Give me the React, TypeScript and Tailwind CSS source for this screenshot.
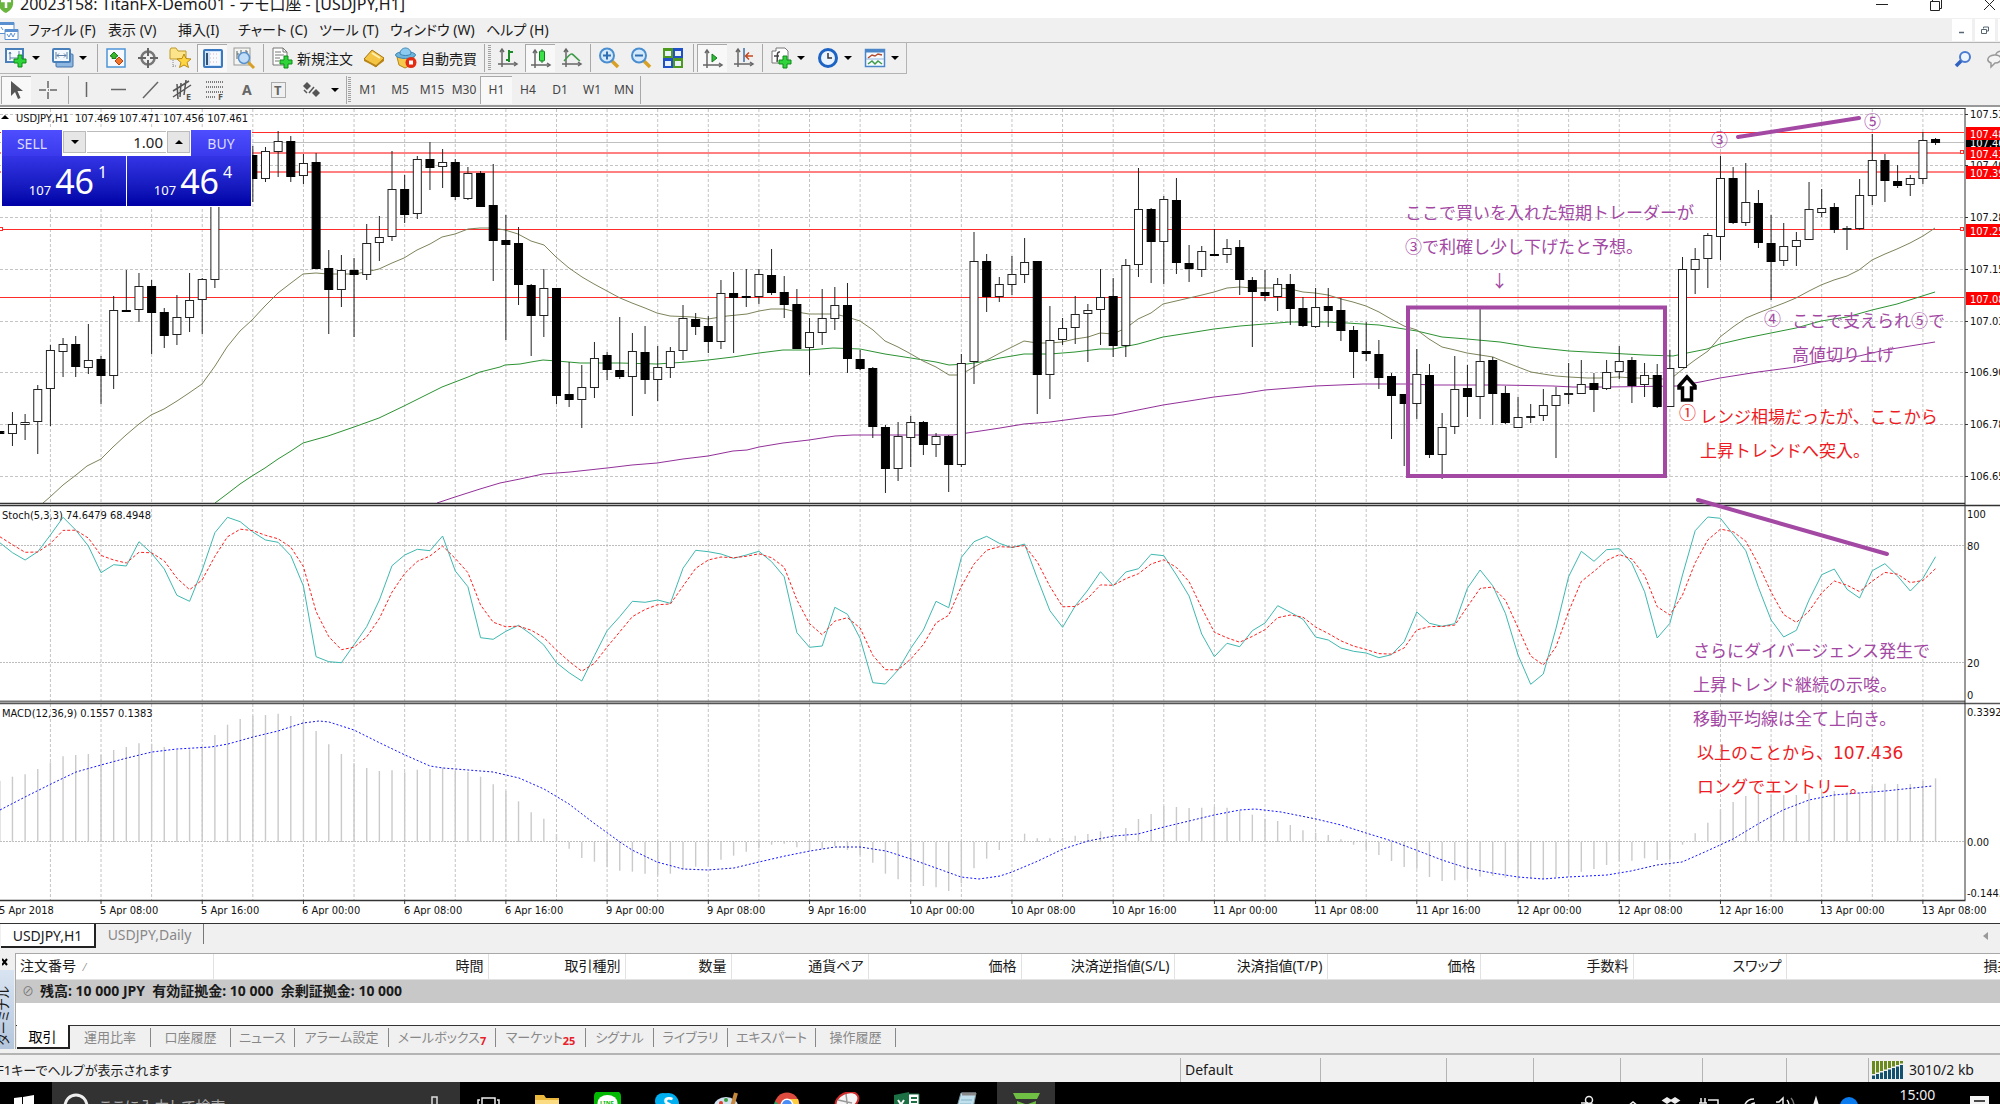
import React from "react";

type Candle = [high: number, top: number, bottom: number, low: number, up: 0 | 1];

const BAR_STEP = 12.652;
const barX = (index: number) => index * BAR_STEP - 0.2;

const candles: (Candle | null)[] = [
  [431, 431, 434, 434, 0], [412, 424, 434, 446, 1], [414, 422, 425, 440, 1], [385, 389, 422, 454, 1],
  [345, 350, 389, 426, 1], [338, 344, 352, 377, 1], [336, 344, 367, 377, 0], [324, 360, 368, 374, 1],
  [356, 359, 376, 404, 0], [296, 310, 376, 389, 1], [270, 310, 311, 312, 0], [273, 286, 310, 322, 1],
  [280, 286, 313, 354, 0], [308, 312, 336, 348, 0], [295, 317, 335, 345, 1], [273, 300, 318, 332, 1],
  [278, 279, 300, 334, 1], [170, 170, 280, 288, 1], null, null,
  [146, 155, 179, 202, 0], [147, 151, 179, 182, 1], [131, 141, 152, 177, 1], [136, 141, 177, 182, 0],
  [154, 163, 176, 184, 1], [153, 162, 269, 269, 0], [250, 268, 290, 334, 0], [255, 270, 290, 307, 1],
  [258, 270, 275, 337, 0], [224, 243, 275, 280, 1], [216, 237, 243, 261, 1], [151, 189, 237, 241, 1],
  [175, 189, 215, 223, 0], [156, 159, 214, 219, 1], [142, 159, 168, 190, 0], [149, 162, 167, 188, 1],
  [159, 162, 197, 200, 0], [167, 173, 199, 200, 1], [171, 173, 207, 207, 0], [164, 205, 241, 281, 0],
  [215, 240, 245, 340, 0], [227, 243, 285, 305, 0], [284, 285, 316, 356, 0], [269, 288, 316, 337, 1],
  [288, 288, 396, 404, 0], [362, 394, 400, 407, 0], [365, 387, 400, 428, 1], [342, 358, 388, 398, 1],
  [352, 355, 370, 380, 0], [317, 370, 377, 379, 0], [333, 351, 377, 416, 1], [326, 352, 380, 394, 0],
  [346, 367, 380, 401, 1], [347, 351, 368, 378, 1], [305, 318, 351, 360, 1], [313, 319, 327, 335, 0],
  [316, 326, 342, 353, 0], [280, 293, 342, 349, 1], [272, 293, 298, 353, 0], [269, 296, 297, 307, 0],
  [269, 274, 297, 304, 1], [249, 275, 293, 295, 0], [276, 292, 305, 318, 0], [289, 304, 349, 349, 0],
  [318, 332, 348, 375, 1], [289, 318, 333, 345, 1], [287, 305, 319, 330, 1], [283, 305, 359, 373, 0],
  [350, 359, 369, 370, 0], [367, 368, 427, 438, 0], [425, 427, 469, 493, 0], [422, 436, 469, 481, 1],
  [416, 422, 438, 467, 1], [421, 422, 445, 455, 0], [433, 436, 445, 457, 1], [435, 436, 465, 492, 0],
  [354, 363, 465, 467, 1], [232, 261, 362, 384, 1], [254, 261, 297, 312, 0], [277, 284, 297, 302, 1],
  [256, 274, 285, 295, 1], [238, 262, 275, 283, 1], [261, 261, 375, 414, 0], [306, 340, 375, 399, 1],
  [318, 328, 340, 345, 1], [296, 314, 328, 344, 1], [304, 310, 314, 362, 1], [269, 297, 310, 345, 1],
  [278, 296, 346, 357, 0], [259, 265, 346, 357, 1], [168, 209, 265, 277, 1], [208, 209, 242, 283, 0],
  [196, 199, 242, 284, 1], [178, 200, 263, 274, 0], [245, 263, 269, 282, 0], [246, 251, 270, 277, 1],
  [229, 254, 256, 256, 0], [239, 248, 255, 263, 1], [240, 247, 280, 295, 0], [277, 280, 292, 347, 0],
  [270, 292, 296, 301, 0], [278, 284, 297, 311, 1], [274, 284, 309, 325, 0], [297, 308, 326, 327, 0],
  [288, 307, 327, 328, 1], [288, 306, 311, 327, 0], [298, 310, 331, 341, 0], [326, 330, 352, 378, 0],
  [322, 351, 354, 361, 0], [340, 354, 378, 389, 0], [373, 376, 396, 439, 0], [394, 394, 404, 466, 0],
  [349, 374, 404, 419, 1], [364, 375, 455, 458, 0], [413, 427, 455, 479, 1], [356, 389, 427, 434, 1],
  [365, 388, 397, 417, 0], [309, 361, 397, 419, 1], [357, 360, 394, 425, 0], [386, 393, 423, 424, 0],
  [397, 417, 428, 428, 1], [404, 416, 418, 423, 1], [389, 405, 416, 421, 1], [387, 395, 406, 458, 1],
  [363, 393, 395, 404, 1], [360, 384, 394, 394, 1], [373, 383, 390, 412, 0], [360, 372, 389, 390, 1],
  [346, 361, 372, 379, 1], [357, 360, 386, 403, 0], [363, 375, 385, 397, 1], [364, 375, 407, 408, 0],
  [350, 368, 407, 407, 1], [257, 269, 368, 368, 1], [248, 259, 270, 294, 1], [233, 235, 259, 288, 1],
  [156, 178, 237, 260, 1], [167, 178, 223, 224, 0], [163, 202, 223, 226, 1], [190, 203, 243, 248, 0],
  [215, 243, 262, 300, 0], [223, 246, 261, 266, 1], [232, 240, 247, 266, 1], [182, 209, 240, 240, 1],
  [189, 208, 213, 217, 1], [203, 207, 230, 233, 0], [226, 228, 230, 250, 1], [179, 195, 229, 230, 1],
  [134, 160, 196, 205, 1], [154, 160, 181, 202, 0], [165, 181, 186, 188, 0], [175, 178, 185, 196, 1],
  [132, 140, 179, 184, 1], [138, 139, 143, 145, 0],
];

const fastAverage =
  "43,503 50,497 63,485 76,475 87,466 101,459 113,447 126,435 139,424 151,415 164,409 177,401 189,393 202,384 215,366 227,347 240,331 252,320 265,306 278,293 291,283 303,274 316,273 328,274 354,274 366,272 379,269 392,263 404,258 417,250 430,244 442,237 455,234 468,229 480,228 493,228 505,230 518,234 531,241 544,245 556,257 569,268 582,277 594,284 607,291 620,298 632,303 645,308 657,313 670,316 693,317 708,319 727,316 747,314 759,311 771,309 784,309 797,312 809,314 835,314 847,317 860,321 873,330 885,341 898,347 911,354 923,361 936,367 949,375 957,375 967,371 974,367 987,360 1000,353 1012,347 1024,341 1037,343 1050,343 1062,342 1075,339 1088,337 1100,333 1113,334 1126,328 1138,319 1151,313 1163,304 1176,301 1189,298 1202,295 1214,292 1227,288 1240,287 1252,288 1277,288 1290,289 1303,292 1315,293 1328,295 1341,299 1353,302 1366,306 1379,312 1391,319 1404,326 1417,330 1429,339 1442,347 1455,350 1467,353 1480,355 1493,357 1500,360 1518,367 1531,372 1543,374 1556,376 1569,377 1587,378 1600,378 1619,377 1632,378 1643,378 1657,379 1667,379 1673,377 1683,369 1695,360 1708,351 1720,337 1733,327 1746,318 1758,313 1771,308 1784,303 1796,298 1809,291 1821,285 1834,280 1847,276 1859,270 1872,260 1885,254 1897,249 1910,243 1923,236 1935,228";
const midAverage =
  "215,503 227,494 240,484 252,476 265,468 278,459 291,451 303,443 328,436 354,427 379,418 404,406 430,393 442,387 468,377 480,372 500,367 505,365 520,364 531,362 543,360 557,361 580,363 620,363 657,364 687,362 708,360 733,357 759,353 783,350 809,350 833,348 860,349 885,354 911,358 936,362 949,365 967,364 987,361 1000,358 1024,354 1050,354 1075,352 1100,349 1113,349 1138,344 1163,337 1189,333 1214,329 1240,326 1265,324 1290,322 1328,322 1347,323 1379,325 1404,329 1417,331 1442,337 1467,339 1500,342 1531,347 1569,351 1607,353 1644,355 1673,356 1687,353 1707,349 1720,344 1746,338 1771,333 1796,328 1821,321 1847,317 1872,310 1897,304 1935,292";
const slowAverage =
  "437,503 455,497 480,489 500,483 520,479 543,474 570,472 607,468 632,465 657,463 683,459 708,456 733,451 747,450 759,447 783,443 809,440 835,436 853,435 953,435 967,433 987,430 1000,428 1024,424 1050,422 1088,417 1113,415 1138,410 1163,405 1189,401 1214,397 1240,394 1265,390 1290,388 1315,386 1363,384 1410,384 1433,385 1500,385 1553,386 1573,387 1607,387 1677,386 1700,382 1720,378 1758,372 1796,367 1821,362 1859,356 1885,350 1935,342";
const macdSignal =
  "0,810 25,797 51,784 76,772 101,765 127,758 152,752 177,749 211,747 228,744 253,737 278,731 303,723 319,721 329,722 354,730 380,743 405,755 430,766 443,768 468,770 493,772 519,778 544,789 569,804 595,824 620,842 632,850 657,862 683,869 708,870 734,868 759,862 785,856 810,851 835,847 860,847 886,851 911,859 936,868 961,877 979,879 1000,876 1012,872 1038,861 1063,849 1088,841 1114,836 1138,834 1164,827 1189,821 1214,815 1240,810 1255,809 1281,812 1316,819 1341,825 1366,833 1392,841 1416,850 1442,860 1467,868 1492,873 1518,877 1543,879 1568,877 1607,875 1631,871 1657,865 1682,862 1707,851 1733,839 1758,824 1783,810 1809,800 1834,795 1859,793 1885,791 1932,786";

// Oscillator values, in thirds of a pixel below the y = 500 line.
const stochMain = [
  128, 158, 180, 155, 105, 52, 90, 138, 218, 194, 198, 125, 160, 207, 286, 304, 210, 98, 52, 65, 96, 120,
  127, 167, 258, 470, 485, 488, 434, 380, 300, 197, 165, 148, 152, 108, 213, 260, 413, 418, 394, 376, 403,
  435, 488, 518, 543, 467, 392, 350, 304, 307, 300, 310, 205, 151, 155, 162, 175, 165, 154, 185, 230, 398,
  442, 438, 322, 343, 415, 548, 552, 510, 445, 390, 304, 323, 172, 125, 109, 130, 143, 132, 235, 332, 382,
  318, 270, 215, 257, 216, 206, 163, 167, 225, 288, 402, 470, 430, 440, 392, 369, 317, 337, 358, 411, 420,
  444, 454, 459, 473, 464, 425, 336, 370, 379, 371, 265, 210, 257, 340, 465, 553, 522, 385, 230, 154, 184,
  149, 146, 190, 275, 414, 370, 225, 92, 51, 55, 103, 152, 262, 360, 411, 391, 300, 224, 207, 268, 294,
  212, 191, 228, 273, 235, 170,
];

const macdBars = [
  842, 830, 823, 807, 787, 769, 765, 762, 765, 750, 741, 730, 731, 741, 750, 748, 738, 705, 674, 657, 647,
  645, 641, 648, 660, 693, 733, 762, 790, 804, 813, 811, 817, 809, 807, 803, 813, 815, 830, 853, 873, 904,
  937, 956, 1002, 1046, 1074, 1085, 1102, 1112, 1115, 1121, 1126, 1121, 1108, 1100, 1100, 1079, 1067, 1055,
  1045, 1034, 1031, 1042, 1050, 1046, 1038, 1050, 1065, 1088, 1121, 1138, 1147, 1158, 1162, 1173, 1150,
  1105, 1076, 1050, 1018, 1001, 1015, 1015, 1014, 1007, 1002, 994, 1002, 984, 957, 942, 918, 921, 924, 923,
  920, 923, 932, 944, 956, 963, 975, 991, 998, 1005, 1018, 1034, 1049, 1065, 1083, 1101, 1106, 1131, 1143,
  1141, 1138, 1130, 1128, 1133, 1138, 1136, 1137, 1131, 1123, 1115, 1107, 1095, 1084, 1082, 1075, 1080,
  1077, 1034, 1000, 968, 928, 906, 888, 882, 885, 885, 885, 880, 873, 873, 875, 878, 857, 851, 852, 852,
  843, 835,
];

const stochSignal = stochMain.reduce<number[]>((acc, value, i) => {
  acc.push(i === 0 ? 110 : (acc[i - 1] + value) / 2);
  return acc;
}, []);

const toPoints = (values: number[]) =>
  values.map((v, i) => `${barX(i).toFixed(1)},${(500 + v / 3).toFixed(1)}`).join(" ");

const verticalGrid = Array.from({ length: 38 }, (_, i) => barX(4 + i * 4));

const priceScale = [
  { y: 114, label: "107.530" },
  { y: 165, label: "107.405" },
  { y: 217, label: "107.280" },
  { y: 269, label: "107.155" },
  { y: 321, label: "107.030" },
  { y: 372, label: "106.905" },
  { y: 424, label: "106.780" },
  { y: 476, label: "106.655" },
];

const levels = [
  { y: 132, label: "107.486", soft: false, handle: false },
  { y: 152, label: "107.436", soft: true, handle: true },
  { y: 171, label: "107.393", soft: true, handle: false },
  { y: 229, label: "107.252", soft: false, handle: true },
  { y: 297, label: "107.088", soft: false, handle: false },
];

const dates = [
  "5 Apr 08:00", "5 Apr 16:00", "6 Apr 00:00", "6 Apr 08:00", "6 Apr 16:00", "9 Apr 00:00", "9 Apr 08:00",
  "9 Apr 16:00", "10 Apr 00:00", "10 Apr 08:00", "10 Apr 16:00", "11 Apr 00:00", "11 Apr 08:00",
  "11 Apr 16:00", "12 Apr 00:00", "12 Apr 08:00", "12 Apr 16:00", "13 Apr 00:00", "13 Apr 08:00",
];

type Note = { x: number; y: number; text: string; price?: string; red?: boolean };

const notes: Note[] = [
  { x: 1405, y: 219, text: "ここで買いを入れた短期トレーダーが" },
  { x: 1405, y: 253, text: "③で利確し少し下げたと予想。" },
  { x: 1491, y: 287, text: "↓" },
  { x: 1711, y: 146, text: "③" },
  { x: 1864, y: 128, text: "⑤" },
  { x: 1764, y: 325, text: "④" },
  { x: 1792, y: 327, text: "ここで支えられ⑤で" },
  { x: 1792, y: 361, text: "高値切り上げ" },
  { x: 1679, y: 419, text: "①", red: true },
  { x: 1700, y: 423, text: "レンジ相場だったが、ここから", red: true },
  { x: 1700, y: 457, text: "上昇トレンドへ突入。", red: true },
  { x: 1693, y: 657, text: "さらにダイバージェンス発生で" },
  { x: 1693, y: 691, text: "上昇トレンド継続の示唆。" },
  { x: 1693, y: 725, text: "移動平均線は全て上向き。" },
  { x: 1697, y: 759, text: "以上のことから、", price: "107.436", red: true },
  { x: 1697, y: 793, text: "ロングでエントリー。", red: true },
];

const Chart: React.FC = () => (
  <svg
    viewBox="0 108 2000 815"
    className="block h-auto w-full bg-white text-[11px] [font-family:'DejaVu_Sans_Condensed','Noto_Sans',sans-serif]"
    role="img"
    aria-label="USDJPY,H1"
  >
    {/* grid */}
    <g stroke="#c4c4c4" strokeDasharray="3 2">
      {verticalGrid.map((x) => (
        <path key={x} d={`M${x} 109V900`} />
      ))}
      {priceScale.map(({ y }) => (
        <path key={y} d={`M0 ${y + 0.5}H1964`} />
      ))}
    </g>
    <g stroke="#bdbdbd" strokeDasharray="2 1">
      <path d="M0 545.5H1964M0 662.5H1964M0 841.5H1964" />
    </g>

    {/* price levels */}
    <path d="M0 142.5H1964" stroke="#c0c0c0" />
    {levels.map(({ y, soft }) => (
      <rect key={y} x={0} y={y} width={1964} height={soft ? 2 : 1} fill={soft ? "#ff8080" : "#ff2a2a"} />
    ))}

    {/* moving averages */}
    <g fill="none">
      <polyline points={slowAverage} stroke="#93309a" />
      <polyline points={midAverage} stroke="#2c9232" />
      <polyline points={fastAverage} stroke="#7c845a" />
    </g>

    {/* candles */}
    {candles.map((candle, i) => {
      if (!candle) return null;
      const [high, top, bottom, low, up] = candle;
      const x = barX(i);
      return (
        <g key={i} stroke="#222">
          <path d={`M${x} ${high}V${low}`} />
          <rect
            x={x - 4}
            y={top + 0.5}
            width={8}
            height={Math.max(bottom - top - 1, 1)}
            fill={up ? "#fff" : "#000"}
            stroke={up ? "#222" : "#000"}
          />
        </g>
      );
    })}

    <g fill="#fff" stroke="#ff2a2a">
      <rect x={-0.5} y={227.5} width={3} height={3} />
      {levels
        .filter((level) => level.handle)
        .map(({ y }) => (
          <rect key={y} x={1960.5} y={y - 1.5} width={3} height={3} />
        ))}
    </g>

    {/* oscillators */}
    <g stroke="#cacaca" strokeWidth={1.4}>
      {macdBars.map((v, i) => (
        <path key={i} d={`M${barX(i)} 842V${500 + v / 3}`} />
      ))}
    </g>
    <g fill="none">
      <polyline points={toPoints(stochMain)} stroke="#3fb8b0" />
      <polyline points={toPoints(stochSignal)} stroke="#ff2020" strokeDasharray="3 2" />
      <polyline points={macdSignal} stroke="#1414ff" strokeDasharray="2 2" />
    </g>

    {/* frames */}
    <g fill="none" stroke="#333">
      <path d="M0 108.5H1965.5" />
      <path d="M0 503.5H1965M0 505.5H2000" strokeWidth={1.4} />
      <path d="M0 504.5H1965" stroke="#bbb" />
      <path d="M0 701.5H1965" stroke="#777" strokeWidth={2} />
      <path d="M0 703.5H2000" stroke="#555" strokeWidth={1.5} />
      <path d="M0 900.5H1965.5" strokeWidth={1.4} />
      <path d="M1965 108V900" />
      {priceScale.map(({ y }) => (
        <path key={y} d={`M1965 ${y + 0.5}h3`} />
      ))}
      {dates.map((date, i) => (
        <path key={date} d={`M${barX(8 + i * 8)} 900v4`} />
      ))}
    </g>

    {/* scales */}
    <g fill="#111">
      <path d="M1 119l4-4 4 4z" fill="#000" />
      <text x={16} y={122} xmlSpace="preserve">
        USDJPY,H1{"  "}107.469 107.471 107.456 107.461
      </text>
      <text x={2} y={519}>Stoch(5,3,3) 74.6479 68.4948</text>
      <text x={2} y={717}>MACD(12,36,9) 0.1557 0.1383</text>
      {priceScale.map(({ y, label }) => (
        <text key={label} x={1970} y={y + 4}>
          {label}
        </text>
      ))}
      <rect x={1966} y={140} width={34} height={12} fill="#000" />
      <text x={1970} y={147} fill="#fff">107.461</text>
      {levels.map(({ y, label }) => (
        <g key={label}>
          <rect x={1966} y={y - 5} width={34} height={13} fill="#f00" />
          <text x={1970} y={y + 6} fill="#fff">
            {label}
          </text>
        </g>
      ))}
      <text x={1967} y={518}>100</text>
      <text x={1967} y={550}>80</text>
      <text x={1967} y={667}>20</text>
      <text x={1967} y={699}>0</text>
      <text x={1967} y={716}>0.3392</text>
      <text x={1967} y={846}>0.00</text>
      <text x={1967} y={897}>-0.1443</text>
      <text x={-1} y={914}>5 Apr 2018</text>
      {dates.map((date, i) => (
        <text key={date} x={100 + Math.round(i * 101.2)} y={914}>
          {date}
        </text>
      ))}
    </g>

    {/* drawn notes */}
    <g fill="none" stroke="#a349a4" strokeWidth={4}>
      <path d="M1738 137L1859 118M1698 500L1887 554" strokeLinecap="round" />
      <rect x={1408} y={307.5} width={257} height={168.5} />
    </g>
    <path
      d="M1687 377l8 9v2h-3.500v12h-9v-12h-3.500v-2z"
      fill="#fff"
      stroke="#000"
      strokeWidth={3.5}
    />
    <g className="text-[17px] [font-family:'Noto_Sans_CJK_JP',sans-serif] [font-feature-settings:normal]">
      {notes.map(({ x, y, text, price, red }) => (
        <text key={`${x}-${y}`} x={x} y={y} fill={red ? "#ed1c24" : "#a349a4"}>
          {text}
          {price && <tspan className="[font-family:'DejaVu_Sans',sans-serif]">{price}</tspan>}
        </text>
      ))}
    </g>
  </svg>
);

const PriceButton: React.FC<{ whole: string; big: string; small: string; label: string }> = ({
  whole,
  big,
  small,
  label,
}) => (
  <button
    aria-label={label}
    className="flex h-[50px] flex-1 items-end justify-center gap-1 bg-gradient-to-b from-[#3434e6] to-[#0000a6] pb-2 pl-2 text-white"
  >
    <span className="text-[13px] leading-4">{whole}</span>
    <span className="text-[34px] leading-[34px]">{big}</span>
    <span className="self-start pt-2 text-[16px] leading-4">{small}</span>
  </button>
);

const OneClickPanel: React.FC = () => (
  <div className="absolute left-px top-[21px] w-[251px] border border-white bg-white [font-family:'Noto_Sans',sans-serif]">
    <div className="flex h-[26px]">
      <button className="w-[60px] bg-gradient-to-b from-[#4e4eff] to-[#3a3aec] text-[14px] text-[#dcdcff]">
        SELL
      </button>
      <div className="flex flex-1 gap-px px-px pb-[3px] pt-px">
        <button aria-label="Volume down" className="flex w-[23px] items-center justify-center border border-[#bbb] bg-[#e6e6e6]">
          <Caret />
        </button>
        <input
          aria-label="Volume"
          defaultValue="1.00"
          className="w-0 flex-1 border-y border-[#bbb] bg-white pr-[3px] text-right text-[15px] text-[#222] outline-none"
        />
        <button aria-label="Volume up" className="flex w-[23px] items-center justify-center border border-[#bbb] bg-[#e6e6e6]">
          <svg width="8" height="4" viewBox="0 0 8 4"><path d="M0 4l4-4 4 4z" /></svg>
        </button>
      </div>
      <button className="w-[60px] bg-gradient-to-b from-[#4e4eff] to-[#3a3aec] text-[14px] text-[#dcdcff]">
        BUY
      </button>
    </div>
    <div className="flex gap-px">
      <PriceButton label="Sell at 107.461" whole="107" big="46" small="1" />
      <PriceButton label="Buy at 107.464" whole="107" big="46" small="4" />
    </div>
  </div>
);

const Caret: React.FC = () => (
  <svg width="8" height="4" viewBox="0 0 8 4">
    <path d="M0 0h8L4 4z" fill="#000" />
  </svg>
);

const Glyph: React.FC<{ children: React.ReactNode }> = ({ children }) => (
  <svg width="22" height="22" viewBox="0 0 22 22" fill="none" className="overflow-visible">
    {children}
  </svg>
);

const Plus: React.FC<{ x: number; y: number }> = ({ x, y }) => (
  <path
    transform={`translate(${x} ${y})`}
    d="M4 0h4v4h4v4H8v4H4V8H0V4h4z"
    fill="#2fd43a"
    stroke="#0c8a18"
  />
);

const Axes = (
  <g stroke="#666" strokeWidth="1.500">
    <path d="M5 3v17M1 17h18" />
    <path d="M3 5l2-3 2 3M17 15l3 2-3 2" />
  </g>
);

const icons = {
  newChart: (
    <Glyph>
      <rect x="1" y="2" width="17" height="13" fill="#f4f9ff" stroke="#4a80ba" strokeWidth="2" />
      <path d="M5 5v8M5 11h10M14 4v5M5 5l-1 2M5 5l1 2" stroke="#5b7ea4" />
      <Plus x={9} y={8} />
    </Glyph>
  ),
  profiles: (
    <Glyph>
      <rect x="4" y="7" width="17" height="13" rx="1" fill="#8db6e0" stroke="#4272a8" />
      <rect x="1" y="2" width="17" height="13" rx="1" fill="#f4f9ff" stroke="#4a80ba" strokeWidth="2" />
      <path d="M4 5v7M15 5v7M5 8.500h9M7 6.500l-2 2 2 2M12 6.500l2 2-2 2" stroke="#5b7ea4" />
    </Glyph>
  ),
  marketWatch: (
    <Glyph>
      <rect x="2" y="2" width="18" height="18" fill="#f6faff" stroke="#4d94d6" strokeWidth="1.500" />
      <path d="M5 9l4-4 4 4-2 .5v2H7v-2z" fill="#38b82e" stroke="#1b7d17" />
      <path d="M10 14l4-4 4 4-4 4z" fill="#f0742c" stroke="#b64310" />
    </Glyph>
  ),
  target: (
    <Glyph>
      <circle cx="11" cy="11" r="6.500" stroke="#777" strokeWidth="2.500" />
      <path d="M11 1v8M11 13v8M1 11h8M13 11h8" stroke="#666" strokeWidth="2" />
    </Glyph>
  ),
  navigator: (
    <Glyph>
      <path d="M1 3l1-2h5l2 3h8v8H1z" fill="#fbe48a" stroke="#c09a28" />
      <path d="M15 7l2 4.500 5 .5-4 3.500 1.500 5-4.500-2.500L10.500 20.500l1.500-5L8 12l5-.5z" fill="#ffd542" stroke="#b98a15" />
      <path d="M4 13v7M4 19h4" stroke="#888" strokeDasharray="1 1" />
    </Glyph>
  ),
  terminal: (
    <Glyph>
      <rect x="2" y="2" width="18" height="17" rx="1" fill="#cfe4fa" stroke="#3a78bf" strokeWidth="2" />
      <rect x="8" y="4" width="10" height="13" fill="#f7fbff" />
      <path d="M5 5v12" stroke="#35506e" strokeWidth="2" />
      <path d="M8 6h9M8 10h9M8 14h9" stroke="#e0b4b4" strokeDasharray="1 2" />
    </Glyph>
  ),
  tester: (
    <Glyph>
      <rect x="1" y="1" width="16" height="17" fill="#f4f4f0" stroke="#999" />
      <path d="M4 4v8M8 3v6M13 3v5M4 7h2M13 5h2" stroke="#566" />
      <path d="M15 15l6 6" stroke="#d8a024" strokeWidth="3" />
      <circle cx="11" cy="11" r="5.500" fill="#c2ddf8" stroke="#5a92cc" strokeWidth="1.500" />
    </Glyph>
  ),
  newOrder: (
    <Glyph>
      <path d="M2 1h10l4 4v13H2z" fill="#fff" stroke="#777" />
      <path d="M12 1v4h4M4 5h6M4 8h9M4 11h5M4 14h4" stroke="#777" />
      <Plus x={9} y={9} />
    </Glyph>
  ),
  gold: (
    <Glyph>
      <path d="M1 12l8-9 12 8-8 9z" fill="#f4c545" stroke="#a3740f" />
      <path d="M1 12l12 6 8-7v3l-8 6-12-6z" fill="#b98418" />
      <path d="M9 6l8 5" stroke="#fff0b0" strokeWidth="2" />
    </Glyph>
  ),
  autoTrade: (
    <Glyph>
      <path d="M2 10h17l-3 8-6 3-6-3z" fill="#f6c94c" stroke="#b58616" />
      <ellipse cx="10.500" cy="8" rx="10" ry="3.500" fill="#6db4dd" stroke="#3c83b0" />
      <path d="M5 7c0-8 11-8 11 0-3 2-8 2-11 0z" fill="#8ccbef" stroke="#3c83b0" />
      <circle cx="16" cy="15.500" r="5.500" fill="#e32c12" />
      <rect x="14" y="13.500" width="4" height="4" fill="#fff" />
    </Glyph>
  ),
  bars: <Glyph>{Axes}<path d="M12 3v12M9 13h3M12 5h4" stroke="#1d8a2a" strokeWidth="2" /></Glyph>,
  candles: (
    <Glyph>
      {Axes}
      <path d="M12 1v14" stroke="#0f7d1f" />
      <rect x="9.500" y="3" width="5" height="10" rx="1" fill="#3be04a" stroke="#0f7d1f" />
    </Glyph>
  ),
  line: <Glyph>{Axes}<path d="M3 14c4-4 6-8 8-7s5 5 8 7" stroke="#3f9a4a" strokeWidth="1.500" /></Glyph>,
  zoomIn: (
    <Glyph>
      <path d="M14 14l6 6" stroke="#d8a024" strokeWidth="3.500" />
      <circle cx="9" cy="8.500" r="7" fill="#d4eafc" stroke="#4a8ed0" strokeWidth="2" />
      <path d="M5 8.500h8M9 4.500v8" stroke="#2f6fb4" strokeWidth="2" />
    </Glyph>
  ),
  zoomOut: (
    <Glyph>
      <path d="M14 14l6 6" stroke="#d8a024" strokeWidth="3.500" />
      <circle cx="9" cy="8.500" r="7" fill="#d4eafc" stroke="#4a8ed0" strokeWidth="2" />
      <path d="M5 8.500h8" stroke="#2f6fb4" strokeWidth="2" />
    </Glyph>
  ),
  tile: (
    <Glyph>
      <path d="M1 1h10v10H1zM11 11h10v10H11z" fill="#4e9a1e" />
      <path d="M11 1h10v10H11zM1 11h10v10H1z" fill="#1f50c8" />
      <path d="M3 4h6v5H3zM13 4h6v5h-6zM3 14h6v5H3zM13 14h6v5h-6z" fill="#e9f2fb" />
    </Glyph>
  ),
  autoScroll: <Glyph>{Axes}<path d="M10 6l5 4-5 4z" fill="#2ebd38" stroke="#157a1d" /></Glyph>,
  shift: (
    <Glyph>
      {Axes}
      <path d="M11 1v14" stroke="#3a6fa8" strokeWidth="1.500" />
      <path d="M13 9h7M16 5.500L12.500 9l3.500 3.500" stroke="#c4481c" strokeWidth="1.500" />
    </Glyph>
  ),
  indicators: (
    <Glyph>
      <path d="M2 4h4V1h9l3 3v12H2z" fill="#fff" stroke="#777" />
      <path d="M10 5c-4-1-2 5-3 10M4 9h5" stroke="#444" strokeWidth="1.500" />
      <Plus x={9} y={9} />
    </Glyph>
  ),
  clock: (
    <Glyph>
      <circle cx="11" cy="11" r="8.500" fill="#e9f3ff" stroke="#1d63c4" strokeWidth="3" />
      <path d="M11 6v5h4" stroke="#333" strokeWidth="1.500" />
    </Glyph>
  ),
  template: (
    <Glyph>
      <rect x="1.500" y="2.500" width="19" height="17" fill="#f7fbff" stroke="#4a86c8" strokeWidth="1.500" />
      <path d="M2 4h18" stroke="#4a86c8" strokeWidth="3" />
      <path d="M4 11l4-3 3 1 3-2 4 1" stroke="#b24a2e" strokeWidth="1.500" />
      <path d="M4 17l4-3 3 3 3-3 4 3" stroke="#3f9a4a" strokeWidth="1.500" />
      <path d="M2 12h18" stroke="#8fb4dc" />
    </Glyph>
  ),
  cursor: <Glyph><path d="M5 2v15l4-4 3 7 2.500-1L11.500 12H17z" fill="#555" /></Glyph>,
  cross: <Glyph><path d="M11 2v7M11 13v7M2 11h7M13 11h7M11 11h1" stroke="#666" strokeWidth="1.500" /></Glyph>,
  vLine: <Glyph><path d="M10.500 3v15" stroke="#666" strokeWidth="1.500" /></Glyph>,
  hLine: <Glyph><path d="M3 10.500h15" stroke="#666" strokeWidth="1.500" /></Glyph>,
  trend: <Glyph><path d="M3 19L18 3" stroke="#666" strokeWidth="1.500" /></Glyph>,
  channel: (
    <Glyph>
      <path d="M1 12L17 2M1 18L19 6M5 5l1 15M9 4l-1 14M14 1l-2 15" stroke="#555" strokeWidth="1.500" />
      <text x="14" y="21" fontSize="9" fontWeight="700" fill="#555">E</text>
    </Glyph>
  ),
  fibo: (
    <Glyph>
      <path d="M2 3h17M2 8h17M2 13h17M2 18h9" stroke="#555" strokeDasharray="1 1" strokeWidth="1.500" />
      <text x="14" y="21" fontSize="9" fontWeight="700" fill="#555">F</text>
    </Glyph>
  ),
  text: <Glyph><text x="6" y="16" fontSize="14" fontWeight="700" fill="#666">A</text></Glyph>,
  label: (
    <Glyph>
      <rect x="3.500" y="3.500" width="14" height="15" stroke="#666" strokeDasharray="1 1" />
      <text x="6" y="16" fontSize="13" fontWeight="700" fill="#666">T</text>
    </Glyph>
  ),
  arrows: (
    <Glyph>
      <path d="M3 7l4-4 4 4-4 4zM12 14l4-4 4 4-4 4z" fill="#555" />
      <path d="M4 11l3 3M14 8l-5 6" stroke="#555" strokeWidth="1.500" />
    </Glyph>
  ),
};

type IconName = keyof typeof icons;

const Tool: React.FC<{ icon: IconName; pressed?: boolean }> = ({ icon, pressed }) => (
  <button
    aria-label={icon}
    aria-pressed={pressed}
    className={
      pressed
        ? "mx-px flex h-7 w-[30px] items-center justify-center border-l border-t border-[#a8a8a8] bg-[#f8f8f8]"
        : "flex h-7 w-8 items-center justify-center"
    }
  >
    {icons[icon]}
  </button>
);

const DropArrow: React.FC<{ label: string }> = ({ label }) => (
  <button aria-label={label} className="flex h-7 w-[15px] items-center">
    <Caret />
  </button>
);

const Separator: React.FC = () => <span className="mx-[2px] h-7 w-px bg-[#a8a8a8]" />;

const Grip: React.FC = () => (
  <span className="mx-px h-[26px] w-[3px] bg-[repeating-linear-gradient(#a0a0a0_0_1px,#f0f0f0_1px_2px)]" />
);

const menus = [
  { label: "ファイル (F)", width: "w-20" },
  { label: "表示 (V)", width: "w-[70px]" },
  { label: "挿入(I)", width: "w-[60px]" },
  { label: "チャート (C)", width: "w-[81px]" },
  { label: "ツール (T)", width: "w-[71px]" },
  { label: "ウィンドウ (W)", width: "w-24" },
  { label: "ヘルプ (H)", width: "w-16" },
];

const timeframes = ["M1", "M5", "M15", "M30", "H1", "H4", "D1", "W1", "MN"];

const columns = [
  { id: "order", label: "注文番号", width: "w-[197px]" },
  { id: "time", label: "時間", width: "w-[275px]" },
  { id: "type", label: "取引種別", width: "w-[137px]" },
  { id: "size", label: "数量", width: "w-[106px]" },
  { id: "symbol", label: "通貨ペア", width: "w-[137px]" },
  { id: "open", label: "価格", width: "w-[153px]" },
  { id: "sl", label: "決済逆指値(S/L)", width: "w-[153px]" },
  { id: "tp", label: "決済指値(T/P)", width: "w-[153px]" },
  { id: "price", label: "価格", width: "w-[153px]" },
  { id: "fee", label: "手数料", width: "w-[153px]" },
  { id: "swap", label: "スワップ", width: "w-[153px]" },
  { id: "profit", label: "損益", width: "w-[230px]" },
];

const terminalTabs = [
  { label: "運用比率", width: "w-[81px]" },
  { label: "口座履歴", width: "w-20" },
  { label: "ニュース", width: "w-16" },
  { label: "アラーム設定", width: "w-[94px]" },
  { label: "メールボックス", badge: "7", width: "w-[107px]" },
  { label: "マーケット", badge: "25", width: "w-[90px]" },
  { label: "シグナル", width: "w-[68px]" },
  { label: "ライブラリ", width: "w-[74px]" },
  { label: "エキスパート", width: "w-[88px]" },
  { label: "操作履歴", width: "w-20" },
];

const TitleBar: React.FC = () => (
  <header className="flex h-[18px] items-start overflow-hidden bg-white">
    <svg width="14" height="13" viewBox="0 0 14 13">
      <path d="M-2 0h15c1 7-2 10-7 13C1 11-2 7-2 0z" fill="#69b53e" />
      <path d="M1 1h10M6 1v7" stroke="#fff" strokeWidth="2.500" />
    </svg>
    <h1 className="ml-[6px] flex-1 whitespace-nowrap text-[16px] leading-[9px]">
      20023158: TitanFX-Demo01 - デモ口座 - [USDJPY,H1]
    </h1>
    <div className="flex">
      <button aria-label="Minimize" className="w-[54px]">
        <svg width="12" height="11" viewBox="0 0 12 11"><path d="M0 4.500h12" stroke="#222" /></svg>
      </button>
      <button aria-label="Restore" className="w-[54px]">
        <svg width="12" height="11" viewBox="0 0 12 11" fill="none" stroke="#222">
          <path d="M.5 1.500h9v9h-9zM2.500 1V-1M9 8.500h2.500V-1" />
        </svg>
      </button>
      <button aria-label="Close" className="w-4">
        <svg width="12" height="11" viewBox="0 0 12 11"><path d="M0-1l11 11M11-1L0 10" stroke="#222" /></svg>
      </button>
    </div>
  </header>
);

const MenuBar: React.FC = () => (
  <nav className="flex h-[25px] items-center overflow-hidden border-b border-[#b4b4b4]">
    <svg width="19" height="19" viewBox="0 0 19 19" fill="#fff" stroke="#5a8fd0">
      <path d="M-1 1.500h15v11H-1z" />
      <path d="M-1 3h15" strokeWidth="2" />
      <path d="M5 8.500h13v10H5z" />
      <path d="M5 10h13" strokeWidth="2" />
      <path d="M7 13l2 3 2-4 2 4 2-4M1 6l2 3" fill="none" />
    </svg>
    <div className="ml-[9px] flex flex-1">
      {menus.map((menu) => (
        <a key={menu.label} href="#" className={`whitespace-nowrap text-[14px] leading-6 ${menu.width}`}>
          {menu.label}
        </a>
      ))}
    </div>
    <div className="flex gap-[3px]">
      <button aria-label="Minimize chart" className="flex h-[22px] w-5 items-center justify-center bg-white">
        <svg width="6" height="8" viewBox="0 0 6 8"><path d="M0 6.500h5" stroke="#567" strokeWidth="1.500" /></svg>
      </button>
      <button aria-label="Restore chart" className="flex h-[22px] w-5 items-center justify-center bg-white">
        <svg width="8" height="8" viewBox="0 0 8 8" fill="none" stroke="#567">
          <path d="M2.500 2.500V1h5v4H6M.5 3.500h5v4h-5z" />
        </svg>
      </button>
      <span className="h-[22px] w-[2px] bg-white" />
    </div>
  </nav>
);

const Toolbars: React.FC = () => (
  <div className="border-b-2 border-[#999]">
    <div className="flex h-[31px] items-center justify-between overflow-hidden">
      <div className="flex h-[31px] items-center border-b border-r border-[#b4b4b4] text-[14px]">
        <Tool icon="newChart" />
        <DropArrow label="New chart" />
        <Tool icon="profiles" />
        <DropArrow label="Profiles" />
        <span className="w-px" />
        <Separator />
        <Tool icon="marketWatch" />
        <Tool icon="target" />
        <Tool icon="navigator" />
        <Tool icon="terminal" pressed />
        <Tool icon="tester" />
        <span className="w-px" />
        <Separator />
        <button className="flex h-7 items-center gap-1 whitespace-nowrap px-[5px]">
          {icons.newOrder}新規注文
        </button>
        <Tool icon="gold" />
        <button className="flex h-7 items-center gap-1 whitespace-nowrap px-[5px]">
          {icons.autoTrade}自動売買
        </button>
        <Separator />
        <Grip />
        <Tool icon="bars" />
        <Tool icon="candles" pressed />
        <Tool icon="line" />
        <Separator />
        <Tool icon="zoomIn" />
        <Tool icon="zoomOut" />
        <Tool icon="tile" />
        <span className="w-[2px]" />
        <Separator />
        <Tool icon="autoScroll" pressed />
        <Tool icon="shift" />
        <Separator />
        <Tool icon="indicators" />
        <DropArrow label="Indicators" />
        <Tool icon="clock" />
        <DropArrow label="Periods" />
        <Tool icon="template" />
        <DropArrow label="Templates" />
      </div>
      <div className="flex items-center gap-[14px]">
        <button aria-label="Search">
          <svg width="18" height="18" viewBox="0 0 18 18" fill="none">
            <path d="M8 10l-6 6" stroke="#2f62c0" strokeWidth="3.500" />
            <circle cx="11" cy="7" r="5" fill="#eef5ff" stroke="#4a7bd0" strokeWidth="2" />
          </svg>
        </button>
        <button aria-label="Messages">
          <svg width="14" height="20" viewBox="0 0 14 20" fill="#f4f4f4" stroke="#999" strokeWidth="1.500">
            <path d="M10 8c-1-4 2-6 6-6v9z" />
            <path d="M8 6c9-1 9 8 1 8l-4 4v-4c-5-2-4-7 3-8z" />
          </svg>
        </button>
      </div>
    </div>
    <div className="flex h-[31px] items-center">
      <div className="flex h-7 items-center border-r border-[#a8a8a8]">
        <Tool icon="cursor" pressed />
        <Tool icon="cross" />
        <span className="w-[2px]" />
        <Separator />
        <Tool icon="vLine" />
        <Tool icon="hLine" />
        <Tool icon="trend" />
        <Tool icon="channel" />
        <Tool icon="fibo" />
        <Tool icon="text" />
        <Tool icon="label" />
        <Tool icon="arrows" />
        <span className="w-1" />
        <DropArrow label="Arrows" />
      </div>
      <Grip />
      <div className="flex h-7 items-center border-r border-[#a8a8a8]">
        {timeframes.map((frame) => (
          <button
            key={frame}
            className={
              frame === "H1"
                ? "h-7 w-8 border-l border-t border-[#a8a8a8] bg-[#f8f8f8] text-[12px] text-[#444]"
                : "h-7 w-8 text-[12px] text-[#444]"
            }
          >
            {frame}
          </button>
        ))}
      </div>
    </div>
  </div>
);

const ChartTabs: React.FC = () => (
  <div className="flex h-[25px] items-start justify-between border-t border-[#333] text-[14px]">
    <div className="flex">
      <button className="ml-px h-6 w-[95px] border-b-2 border-r-2 border-[#222] bg-white">USDJPY,H1</button>
      <button className="h-5 w-[108px] border-r border-[#777] text-[#888]">USDJPY,Daily</button>
    </div>
    <button aria-label="Scroll tabs left" className="mr-3 mt-2">
      <svg width="5" height="8" viewBox="0 0 5 8"><path d="M5 0v8L0 4z" fill="#999" /></svg>
    </button>
  </div>
);

const Terminal: React.FC = () => (
  <section className="mt-[5px] flex overflow-hidden">
    <div className="flex w-[15px] flex-col items-start">
      <button aria-label="Close terminal" className="h-[17px] pl-[2px]">
        <svg width="6" height="8" viewBox="0 0 6 8"><path d="M0 1l5 6M5 1L0 7" stroke="#000" strokeWidth="2" /></svg>
      </button>
      <div className="flex w-[14px] flex-1 items-end overflow-hidden bg-gradient-to-b from-[#d9e4f1] to-[#b4c6dc] pb-1">
        <span className="-ml-1 rotate-180 whitespace-nowrap text-[13px] leading-[14px] [text-orientation:sideways] [writing-mode:vertical-rl]">
          ターミナル
        </span>
      </div>
    </div>
    <div className="min-w-0 flex-1 border-l border-t border-[#a8a8a8]">
      <div className="overflow-hidden bg-white pb-[22px]">
        <table className="w-[2000px] table-fixed border-collapse text-[14px] leading-5">
          <thead>
            <tr className="h-[25px]">
              {columns.map((column, i) => (
                <th
                  key={column.id}
                  className={`border-b border-r border-[#e2e2e2] font-normal ${column.width} ${
                    i === 0 ? "pl-1 text-left" : "pr-1 text-right"
                  }`}
                >
                  {column.label}
                  {i === 0 && <span className="ml-2 text-[10px] text-[#888]">⁄</span>}
                </th>
              ))}
            </tr>
          </thead>
          <tbody>
            <tr className="h-6 bg-[#c8c8c8] font-bold">
              <td colSpan={12} className="whitespace-pre pl-[6px]">
                <span className="mr-[6px] inline-block text-[12px] font-normal text-[#777]">⊘</span>
                {"残高: 10 000 JPY  有効証拠金: 10 000  余剰証拠金: 10 000"}
              </td>
            </tr>
          </tbody>
        </table>
      </div>
      <div className="flex h-6 items-start border-t border-[#333] text-[13px] text-[#888]">
        <button className="-mt-px ml-px h-6 w-[53px] border-b-2 border-r-2 border-[#222] bg-white text-[14px] text-black">
          取引
        </button>
        {terminalTabs.map((tab) => (
          <button
            key={tab.label}
            className={`mt-[2px] h-[19px] whitespace-nowrap border-r border-[#888] leading-[19px] ${tab.width}`}
          >
            {tab.label}
            {tab.badge && <sub className="text-[11px] font-bold text-[#e8202a]">{tab.badge}</sub>}
          </button>
        ))}
      </div>
    </div>
  </section>
);

const StatusBar: React.FC = () => (
  <footer className="mt-1 flex h-[29px] items-end border-t-2 border-[#b4b4b4] text-[14px] leading-6">
    <p className="-ml-[3px] flex-1 whitespace-nowrap text-[13px]">F1キーでヘルプが表示されます</p>
    <p className="h-6 w-[140px] border-l border-[#b4b4b4] pl-1">Default</p>
    <span className="h-6 w-[126px] border-l border-[#b4b4b4]" />
    <span className="h-6 w-[87px] border-l border-[#b4b4b4]" />
    <span className="h-6 w-[87px] border-l border-[#b4b4b4]" />
    <span className="h-6 w-[82px] border-l border-[#b4b4b4]" />
    <span className="h-6 w-[84px] border-l border-[#b4b4b4]" />
    <span className="h-6 w-[82px] border-l border-[#b4b4b4]" />
    <div className="flex h-6 w-[132px] items-center gap-[5px] border-l border-[#b4b4b4] pl-[3px]">
      <svg width="32" height="18" viewBox="0 0 32 18">
        {Array.from({ length: 8 }, (_, i) => (
          <g key={i}>
            <rect x={i * 4} y={0} width={3} height={13 - i * 1.5} fill="#6b8a1e" />
            <rect x={i * 4} y={14.5 - i * 1.5} width={3} height={3.5 + i * 1.5} fill="#12506e" />
          </g>
        ))}
      </svg>
      <span>3010/2 kb</span>
    </div>
  </footer>
);

const taskApps = [
  {
    name: "Explorer",
    art: (
      <>
        <path d="M1 3h9l2 3h13v18H1z" fill="#e9b83c" />
        <path d="M1 8h24v16H1z" fill="#fbdc82" />
      </>
    ),
  },
  {
    name: "LINE",
    art: (
      <>
        <rect x="0" y="-1" width="27" height="27" rx="5" fill="#00b900" />
        <ellipse cx="13.500" cy="11" rx="10" ry="8" fill="#fff" />
        <text x="6" y="13" fontSize="6" fontWeight="700" fill="#00b900">LINE</text>
      </>
    ),
  },
  {
    name: "Skype",
    art: (
      <>
        <circle cx="9" cy="9" r="8" fill="#00aff0" />
        <circle cx="14" cy="12" r="11" fill="#00aff0" />
        <text x="9" y="19" fontSize="19" fontWeight="700" fill="#fff">S</text>
      </>
    ),
  },
  {
    name: "Paint",
    art: (
      <>
        <ellipse cx="12" cy="14" rx="12" ry="9" fill="#cfe0ee" />
        <circle cx="7" cy="11" r="2" fill="#e0402c" />
        <circle cx="12" cy="8" r="2" fill="#3aa040" />
        <circle cx="6" cy="16" r="2" fill="#2b6fc4" />
        <path d="M22 1l-4 14" stroke="#c7893e" strokeWidth="4" />
      </>
    ),
  },
  {
    name: "Chrome",
    art: (
      <>
        <circle cx="13" cy="13" r="12.500" fill="#dd4b3e" />
        <path d="M1 9l8 7-3 8C0 20-1 14 1 9z" fill="#1da462" />
        <path d="M13 7h11c3 8-2 16-10 18z" fill="#ffcd40" />
        <circle cx="13" cy="13" r="6.500" fill="#fff" />
        <circle cx="13" cy="13" r="5" fill="#4a8cf5" />
      </>
    ),
  },
  {
    name: "Snipping Tool",
    art: (
      <>
        <ellipse cx="13" cy="9" rx="12" ry="8" fill="#f5f5f5" stroke="#d02a2a" strokeWidth="2" transform="rotate(-25 13 9)" />
        <path d="M4 8l14 3M12 2l2 16" stroke="#999" strokeWidth="1.500" />
      </>
    ),
  },
  {
    name: "Excel",
    art: (
      <>
        <path d="M12 2h13v20H12z" fill="#fff" stroke="#1d7044" />
        <path d="M17 6h6M17 10h6M17 14h6" stroke="#1d7044" strokeWidth="2" />
        <path d="M0 3l15-3v24L0 21z" fill="#1d7044" />
        <path d="M4 8l6 9M10 8l-6 9" stroke="#fff" strokeWidth="2" />
      </>
    ),
  },
  {
    name: "Notepad",
    art: (
      <>
        <path d="M7 1h15l-4 21H1z" fill="#bfe0ec" stroke="#7f99a4" />
        <path d="M8 2h14" stroke="#888" strokeWidth="3" />
        <path d="M7 8h11M6 12h11" stroke="#86b4c6" />
      </>
    ),
  },
];

const Taskbar: React.FC = () => (
  <div className="flex h-[22px] items-start overflow-hidden bg-black text-[#eee]">
    <button aria-label="Start" className="w-[52px] pl-[14px] pt-[13px]">
      <svg width="20" height="20" viewBox="0 0 20 20" fill="#fff">
        <path d="M0 3l8-1v8H0zM9 2l11-2v10H9zM0 11h8v8l-8-1zM9 11h11v9L9 19z" />
      </svg>
    </button>
    <label className="flex h-[44px] w-[408px] items-start bg-[#323232] pl-[11px]">
      <svg width="26" height="26" viewBox="0 0 26 26" className="mt-[11px]">
        <circle cx="13" cy="13" r="11" fill="none" stroke="#eee" strokeWidth="3" />
      </svg>
      <input
        aria-label="ここに入力して検索"
        placeholder="ここに入力して検索"
        className="ml-[10px] mt-[14px] h-5 w-0 flex-1 bg-transparent text-[15px] leading-5 outline-none placeholder:text-[#aaa]"
      />
      <svg width="10" height="20" viewBox="0 0 10 20" fill="none" stroke="#ddd" className="mr-5 mt-[14px]">
        <rect x="2" y="1" width="5" height="12" strokeWidth="1.500" />
      </svg>
    </label>
    <button aria-label="Task view" className="flex w-[57px] justify-center pt-[14px]">
      <svg width="24" height="20" viewBox="0 0 24 20" fill="none" stroke="#eee" strokeWidth="1.500">
        <path d="M5 2h13v14H5zM3 4H1v10h2M20 4h2v10h-2" />
      </svg>
    </button>
    {taskApps.map((app) => (
      <button key={app.name} aria-label={app.name} className="flex w-[60px] justify-center pt-[10px]">
        <svg width="27" height="26" viewBox="0 0 27 26">{app.art}</svg>
      </button>
    ))}
    <button aria-label="TitanFX" className="flex h-10 w-[58px] justify-center bg-[#333] pt-[11px]">
      <svg width="27" height="26" viewBox="0 0 27 26" fill="#6fbf44">
        <path d="M0 0h27l-3 6H3zM4 8l8 3v12c-5-3-8-9-8-15zM23 8l-8 3v12c5-3 8-9 8-15z" />
      </svg>
    </button>
    <div className="flex flex-1 items-start justify-end">
      <svg width="284" height="22" viewBox="1575 0 284 22" fill="none" stroke="#eee" strokeWidth="1.500">
        <circle cx="1583" cy="18" r="3.500" />
        <path d="M1574 21h8M1577 26c0-6 12-6 12 0" />
        <path d="M1622 24l5-4 5 4" />
        <path d="M1661 16l4 2.500-4 2.500-4-2.500zM1669 16l4 2.500-4 2.500-4-2.500z" fill="#eee" />
        <path d="M1695 16v5M1699 16v5M1693 21h8M1702 18h10v8" />
        <path d="M1738 26c1-6 5-9 10-9M1743 26c1-3 3-5 6-5" />
        <path d="M1770 20h3l4-4v10M1781 18c2 2 2 4 2 6" />
        <path d="M1785 16c3 3 3 6 3 8" stroke="#777" />
        <path d="M1810 16l-3 10h6z" fill="#eee" />
        <circle cx="1843" cy="24" r="9" fill="#0a7cf0" stroke="none" />
      </svg>
      <time className="w-[105px] pt-[5px] text-center text-[14px] leading-4">15:00</time>
      <button aria-label="Notifications" className="mr-[11px] pt-[14px]">
        <svg width="19" height="16" viewBox="0 0 19 16">
          <path d="M0 0h19v16H0z" fill="#f4f4f4" />
          <path d="M4 5h11M4 9h11" stroke="#111" strokeWidth="1.500" />
        </svg>
      </button>
    </div>
  </div>
);

export default function App() {
  return (
    <main className="overflow-hidden bg-[#f0f0f0] text-[#1a1a1a] [font-family:'Noto_Sans','Noto_Sans_CJK_JP',sans-serif] [font-feature-settings:'palt']">
      <TitleBar />
      <MenuBar />
      <Toolbars />
      <div className="relative border-t border-white">
        <Chart />
        <OneClickPanel />
      </div>
      <ChartTabs />
      <Terminal />
      <StatusBar />
      <Taskbar />
    </main>
  );
}
